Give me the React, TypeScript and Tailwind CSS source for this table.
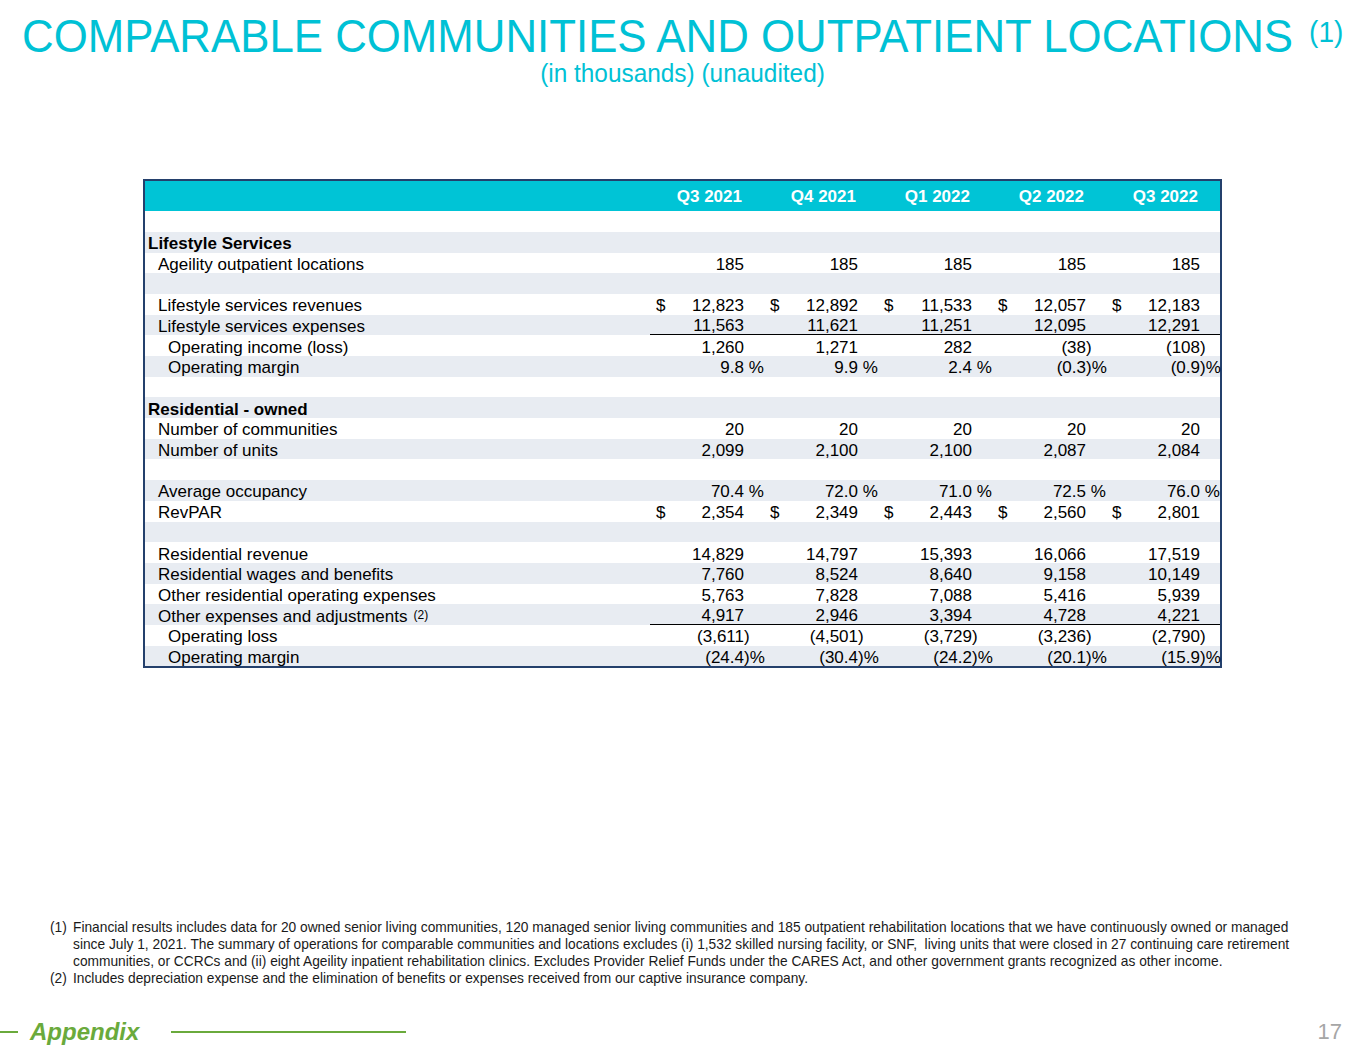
import React from 'react';

type Row = {
  label?: string;
  indent?: 0 | 1 | 2;
  bold?: boolean;
  dollar?: boolean;
  underline?: boolean;
  sup?: string;
  values?: string[];
};

const quarters = ['Q3 2021', 'Q4 2021', 'Q1 2022', 'Q2 2022', 'Q3 2022'];

const rows: Row[] = [
  {},
  { label: 'Lifestyle Services', bold: true },
  { label: 'Ageility outpatient locations', indent: 1, values: ['185', '185', '185', '185', '185'] },
  {},
  { label: 'Lifestyle services revenues', indent: 1, dollar: true, values: ['12,823', '12,892', '11,533', '12,057', '12,183'] },
  { label: 'Lifestyle services expenses', indent: 1, underline: true, values: ['11,563', '11,621', '11,251', '12,095', '12,291'] },
  { label: 'Operating income (loss)', indent: 2, values: ['1,260', '1,271', '282', '(38)', '(108)'] },
  { label: 'Operating margin', indent: 2, values: ['9.8 %', '9.9 %', '2.4 %', '(0.3)%', '(0.9)%'] },
  {},
  { label: 'Residential - owned', bold: true },
  { label: 'Number of communities', indent: 1, values: ['20', '20', '20', '20', '20'] },
  { label: 'Number of units', indent: 1, values: ['2,099', '2,100', '2,100', '2,087', '2,084'] },
  {},
  { label: 'Average occupancy', indent: 1, values: ['70.4 %', '72.0 %', '71.0 %', '72.5 %', '76.0 %'] },
  { label: 'RevPAR', indent: 1, dollar: true, values: ['2,354', '2,349', '2,443', '2,560', '2,801'] },
  {},
  { label: 'Residential revenue', indent: 1, values: ['14,829', '14,797', '15,393', '16,066', '17,519'] },
  { label: 'Residential wages and benefits', indent: 1, values: ['7,760', '8,524', '8,640', '9,158', '10,149'] },
  { label: 'Other residential operating expenses', indent: 1, values: ['5,763', '7,828', '7,088', '5,416', '5,939'] },
  { label: 'Other expenses and adjustments', indent: 1, sup: '(2)', underline: true, values: ['4,917', '2,946', '3,394', '4,728', '4,221'] },
  { label: 'Operating loss', indent: 2, values: ['(3,611)', '(4,501)', '(3,729)', '(3,236)', '(2,790)'] },
  { label: 'Operating margin', indent: 2, values: ['(24.4)%', '(30.4)%', '(24.2)%', '(20.1)%', '(15.9)%'] },
];

// split a value into the aligned number and the part that hangs to its right
function split(v: string): [string, string] {
  if (v.endsWith(')%')) return [v.slice(0, -2), ')%'];
  if (v.endsWith(' %')) return [v.slice(0, -2), '\u00a0%'];
  if (v.endsWith(')')) return [v.slice(0, -1), ')'];
  return [v, ''];
}

const indentClass = ['pl-[3px]', 'pl-[13px]', 'pl-[23px]'];

const ValueCell = ({ value, dollar }: { value: string; dollar?: boolean }) => {
  const [num, suffix] = split(value);
  return (
    <div className="flex w-[114px] items-center pl-[6px]">
      {dollar && <span>$</span>}
      <span className="ml-auto">{num}</span>
      <span className="w-[20px] whitespace-pre">{suffix}</span>
    </div>
  );
};

const App: React.FC = () => {
  return (
    <div className="relative flex h-[1055px] w-[1365px] flex-col bg-white font-['Liberation_Sans',Arial,sans-serif] text-black">
      <h1 className="mt-[15px] origin-bottom scale-y-[1.06] whitespace-nowrap pl-[22px] text-[43.8px] leading-none text-[#00c1d5]">
        COMPARABLE COMMUNITIES AND OUTPATIENT LOCATIONS
        <sup className="relative -top-[9px] ml-[16px] text-[28px]">(1)</sup>
      </h1>
      <p className="mt-[2px] origin-top scale-y-[1.06] text-center text-[24.4px] leading-none text-[#00c1d5]">(in thousands) (unaudited)</p>

      <div className="ml-[143px] mt-[94px] w-[1079px] border-2 border-[#24406c] text-[17px]">
        <div className="flex h-[30px] items-center bg-[#00c4d6] pt-[1px] font-bold text-white">
          <div className="w-[505px]" />
          {quarters.map((q) => (
            <div key={q} className="w-[114px] pr-[22px] text-right">
              {q}
            </div>
          ))}
        </div>
        {rows.map((r, i) => (
          <div
            key={i}
            className={`flex h-[20.7px] items-center leading-none ${i % 2 === 1 ? 'bg-[#e8ecf2]' : 'bg-white'}`}
          >
            <div className={`w-[505px] whitespace-nowrap pt-[3px] ${indentClass[r.indent ?? 0]} ${r.bold ? 'font-bold' : ''}`}>
              {r.label}
              {r.sup && <sup className="relative -top-[3px] ml-[6px] text-[12px]">{r.sup}</sup>}
            </div>
            {r.values && (
              <div className={`flex h-full items-center pt-[3px] ${r.underline ? 'border-b-[1.5px] border-black' : ''}`}>
                {r.values.map((v, j) => (
                  <ValueCell key={j} value={v} dollar={r.dollar} />
                ))}
              </div>
            )}
          </div>
        ))}
      </div>

      <div className="ml-[50px] mt-[251px] w-[1300px] text-[13.75px] leading-[17px] text-[#1a1a1a]">
        <div className="flex">
          <span className="w-[23px] shrink-0">(1)</span>
          <span className="whitespace-nowrap">
            Financial results includes data for 20 owned senior living communities, 120 managed senior living communities and 185 outpatient rehabilitation locations that we have continuously owned or managed
            <br />
            since July 1, 2021. The summary of operations for comparable communities and locations excludes (i) 1,532 skilled nursing facility, or SNF,&nbsp; living units that were closed in 27 continuing care retirement
            <br />
            communities, or CCRCs and (ii) eight Ageility inpatient rehabilitation clinics. Excludes Provider Relief Funds under the CARES Act, and other government grants recognized as other income.
          </span>
        </div>
        <div className="flex">
          <span className="w-[23px] shrink-0">(2)</span>
          <span>Includes depreciation expense and the elimination of benefits or expenses received from our captive insurance company.</span>
        </div>
      </div>

      <div className="mt-auto mb-[11px] flex items-center">
        <div className="h-[2px] w-[18px] bg-[#6aaa3c]" />
        <span className="ml-[12px] text-[24px] font-bold italic leading-none text-[#6aaa3c]">Appendix</span>
        <div className="ml-[32px] h-[2px] w-[235px] bg-[#6aaa3c]" />
        <span className="ml-auto mr-[23px] text-[22px] leading-none text-[#a6a6a6]">17</span>
      </div>
    </div>
  );
};

export default App;
